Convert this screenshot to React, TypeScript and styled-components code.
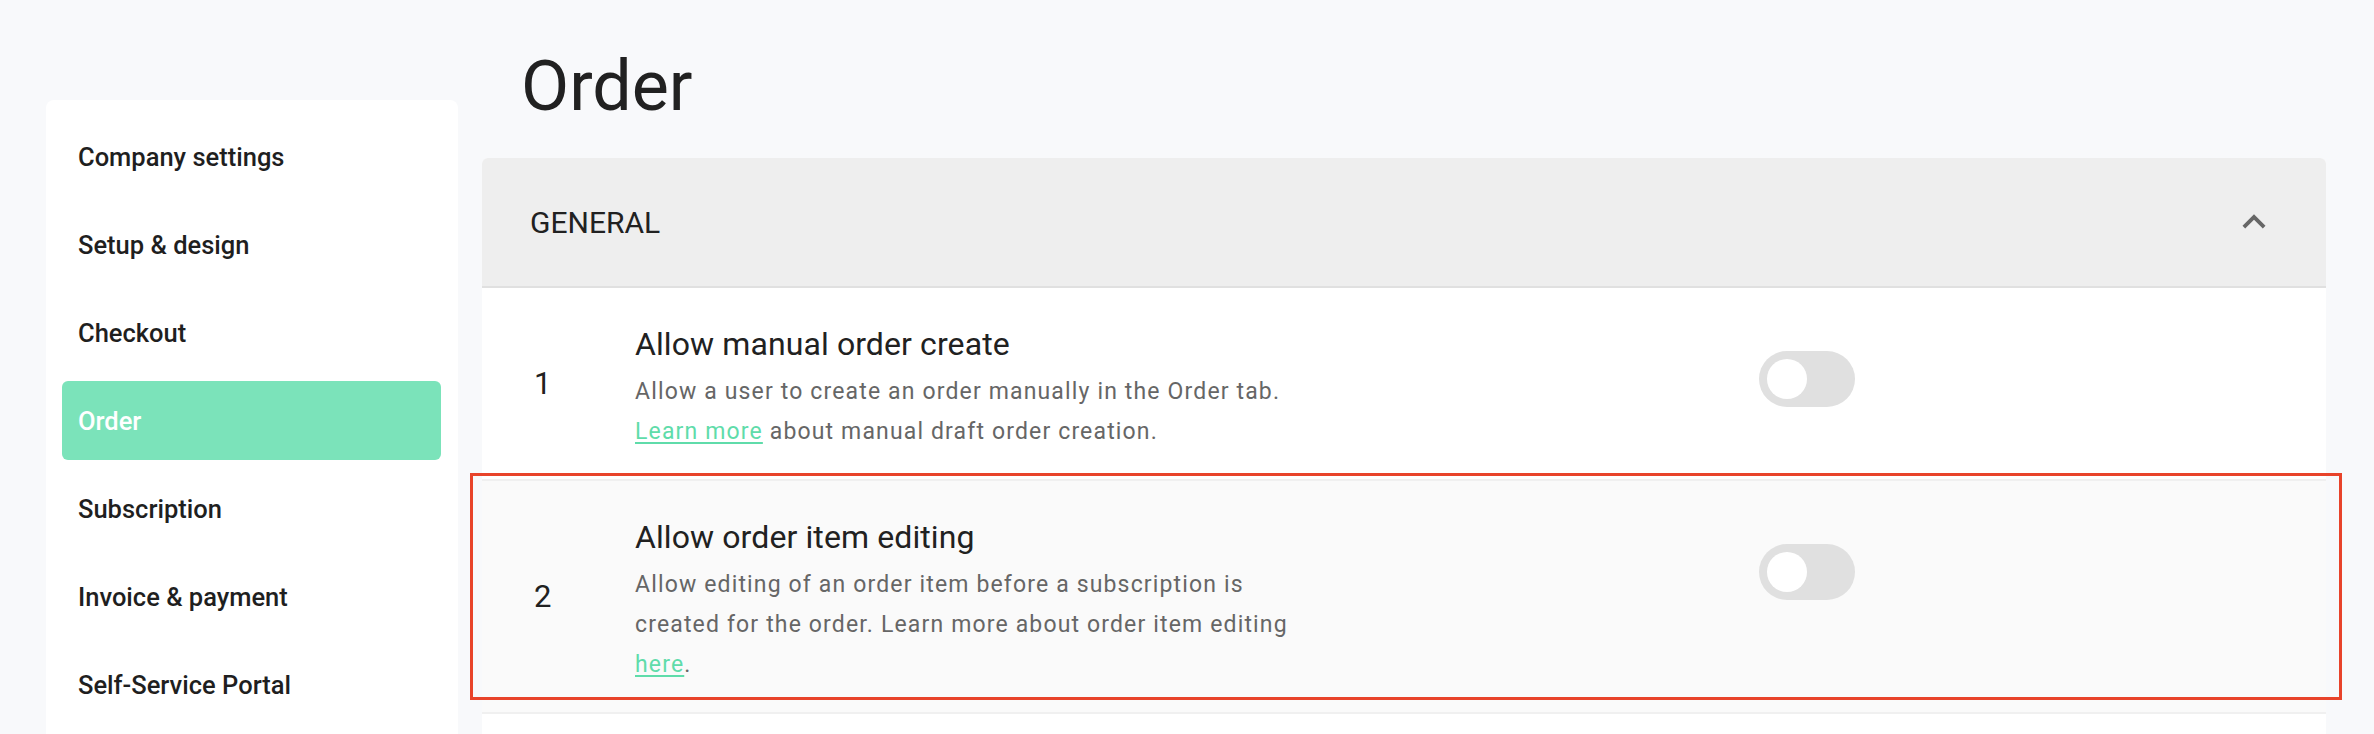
import React, { FC } from 'react';
import styled, { createGlobalStyle } from 'styled-components';

const GlobalStyle = createGlobalStyle`
  body {
    margin: 0;
    background: #f8f9fb;
    font-family: Roboto, "Liberation Sans", Arial, sans-serif;
    color: #212121;
  }
`;

const Page = styled.div`
  display: flex;
  align-items: flex-start;
  gap: 24px;
  padding: 0 48px 0 46px;
`;

const Sidebar = styled.nav`
  flex: 0 0 412px;
  margin-top: 100px;
  min-height: 660px;
  box-sizing: border-box;
  padding: 17px 17px 17px 16px;
  background: #fff;
  border-radius: 8px;
  display: flex;
  flex-direction: column;
  gap: 9px;
`;

const NavItem = styled.a<{ active?: boolean }>`
  display: flex;
  align-items: center;
  height: 79px;
  padding-left: 16px;
  border-radius: 6px;
  font-size: 25.5px;
  font-weight: 500;
  color: ${({ active }) => (active ? '#fff' : '#1f1f1f')};
  background: ${({ active }) => (active ? '#7be3ba' : 'transparent')};
  text-decoration: none;
  cursor: pointer;
`;

const Main = styled.main`
  flex: 1;
  min-width: 0;
`;

const Title = styled.h1`
  margin: 45px 0 31px;
  padding-left: 39px;
  font-size: 70px;
  line-height: 82px;
  font-weight: 400;
  color: #212121;
`;

const Panel = styled.section`
  background: #fff;
  border-radius: 6px;
`;

const PanelHeader = styled.header`
  display: flex;
  align-items: center;
  justify-content: space-between;
  height: 128px;
  padding: 0 49px 0 48px;
  background: #eeeeee;
  border-bottom: 2px solid #e0e0e0;
  border-radius: 6px 6px 0 0;
`;

const SectionName = styled.h2`
  margin: 0;
  font-size: 30px;
  font-weight: 400;
  color: #212121;
`;

const Rows = styled.div`
  min-height: 480px;
`;

const Row = styled.div<{ highlighted?: boolean }>`
  position: relative;
  display: flex;
  align-items: center;
  padding: 31px 0 31px 52px;
  background: ${({ highlighted }) => (highlighted ? '#fafafa' : '#fff')};
  border-bottom: 2px solid #f0f0f0;
`;

const Num = styled.div`
  flex: 0 0 101px;
  font-size: 31px;
  color: #212121;
`;

const TextCol = styled.div`
  flex: 0 0 1124px;
  padding-top: 4px;
  margin-bottom: -4px;
`;

const ItemTitle = styled.div`
  font-size: 32px;
  line-height: 42px;
  letter-spacing: 0.1px;
  color: #212121;
`;

const Desc = styled.p`
  margin: 7px 0 0;
  max-width: 672px;
  font-size: 23px;
  line-height: 40px;
  color: #666;
  letter-spacing: 1.15px;
`;

const Link = styled.a`
  color: #5fdcaa;
  text-decoration: underline;
  text-decoration-thickness: 2px;
  text-underline-offset: 3px;
  cursor: pointer;
`;

const Track = styled.span`
  align-self: flex-start;
  margin-top: 32px;
  display: flex;
  align-items: center;
  box-sizing: border-box;
  width: 96px;
  height: 56px;
  padding: 8px;
  border-radius: 28px;
  background: #e0e0e0;
`;

const Thumb = styled.span`
  width: 40px;
  height: 40px;
  border-radius: 50%;
  background: #fff;
`;

const Annotation = styled.div`
  position: absolute;
  left: -12px;
  top: -8px;
  right: -16px;
  bottom: 12px;
  border: 3px solid #e8432a;
  pointer-events: none;
`;

const Toggle: FC = () => (
  <Track>
    <Thumb />
  </Track>
);

const ChevronUp: FC = () => (
  <svg width="46" height="46" viewBox="0 0 24 24" fill="#666">
    <path d="M12 8l-6 6 1.41 1.41L12 10.83l4.59 4.58L18 14z" />
  </svg>
);

const navItems = [
  'Company settings',
  'Setup & design',
  'Checkout',
  'Order',
  'Subscription',
  'Invoice & payment',
  'Self-Service Portal',
];

export const App: FC = () => (
  <>
    <GlobalStyle />
    <Page>
      <Sidebar>
        {navItems.map((item) => (
          <NavItem key={item} active={item === 'Order'}>{item}</NavItem>
        ))}
      </Sidebar>
      <Main>
        <Title>Order</Title>
        <Panel>
          <PanelHeader>
            <SectionName>GENERAL</SectionName>
            <ChevronUp />
          </PanelHeader>
          <Rows>
            <Row>
              <Num>1</Num>
              <TextCol>
                <ItemTitle>Allow manual order create</ItemTitle>
                <Desc>
                  Allow a user to create an order manually in the Order tab.
                  <br />
                  <Link>Learn more</Link> about manual draft order creation.
                </Desc>
              </TextCol>
              <Toggle />
            </Row>
            <Row highlighted>
              <Num>2</Num>
              <TextCol>
                <ItemTitle>Allow order item editing</ItemTitle>
                <Desc>
                  Allow editing of an order item before a subscription is created for the order.
                  {' '}Learn more about order item editing <Link>here</Link>.
                </Desc>
              </TextCol>
              <Toggle />
              <Annotation />
            </Row>
          </Rows>
        </Panel>
      </Main>
    </Page>
  </>
);

export default App;
